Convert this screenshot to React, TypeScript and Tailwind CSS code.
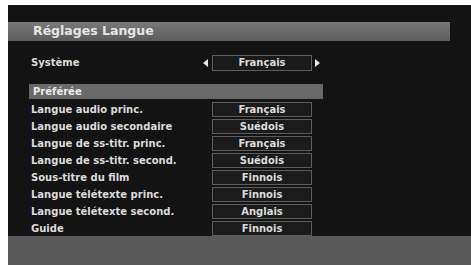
const rows: [string, string][] = [
  ['Langue audio princ.', 'Français'],
  ['Langue audio secondaire', 'Suédois'],
  ['Langue de ss-titr. princ.', 'Français'],
  ['Langue de ss-titr. second.', 'Suédois'],
  ['Sous-titre du film', 'Finnois'],
  ['Langue télétexte princ.', 'Finnois'],
  ['Langue télétexte second.', 'Anglais'],
  ['Guide', 'Finnois'],
];

export default function App() {
  return (
    <div className="w-[471px] h-[265px] bg-white pt-[5px] pl-[8px] overflow-hidden font-['DejaVu_Sans',sans-serif] font-bold text-[#dcdcdc]">
      <div className="flex flex-col w-full h-full bg-[#131313]">
        {/* title bar */}
        <div className="mt-[17px] w-[442px] h-[19px] bg-gradient-to-b from-[#7a7a7a] via-[#6a6a6a] to-[#5c5c5c] flex items-center pl-[25px] text-[12.5px] leading-none text-[#e6e6e6]">
          Réglages Langue
        </div>

        {/* Système */}
        <div className="mt-[14px] h-[16px] flex items-center">
          <span className="w-[181px] pl-[23px] text-[10px] leading-none">Système</span>
          <span className="w-[23px] flex justify-end pr-[4px]">
            <svg width="5" height="8" viewBox="0 0 5 8"><path d="M5 0L0 4L5 8Z" fill="#e8e8e8" /></svg>
          </span>
          <div className="w-[100px] h-[16px] border border-[#5e5e5e] bg-[#1a1a1a] flex items-center justify-center text-[10px] leading-none">
            Français
          </div>
          <span className="pl-[3px]">
            <svg width="5" height="8" viewBox="0 0 5 8"><path d="M0 0L5 4L0 8Z" fill="#e8e8e8" /></svg>
          </span>
        </div>

        {/* Préférée */}
        <div className="mt-[13px] ml-[21px] w-[294px] h-[15px] bg-[#696969] flex items-center pl-[4px] text-[10px] leading-none text-[#ececec]">
          Préférée
        </div>

        <div className="mt-[3px] flex flex-col gap-[2px]">
          {rows.map(([label, value]) => (
            <div key={label} className="h-[15px] flex items-center">
              <span className="w-[204px] pl-[23px] text-[10px] leading-none">{label}</span>
              <div className="w-[100px] h-[15px] border border-[#5e5e5e] bg-[#1b1b1b] flex items-center justify-center text-[10px] leading-none">
                {value}
              </div>
            </div>
          ))}
        </div>

        <div className="mt-auto h-[29px] bg-[#595959]" />
      </div>
    </div>
  );
}
